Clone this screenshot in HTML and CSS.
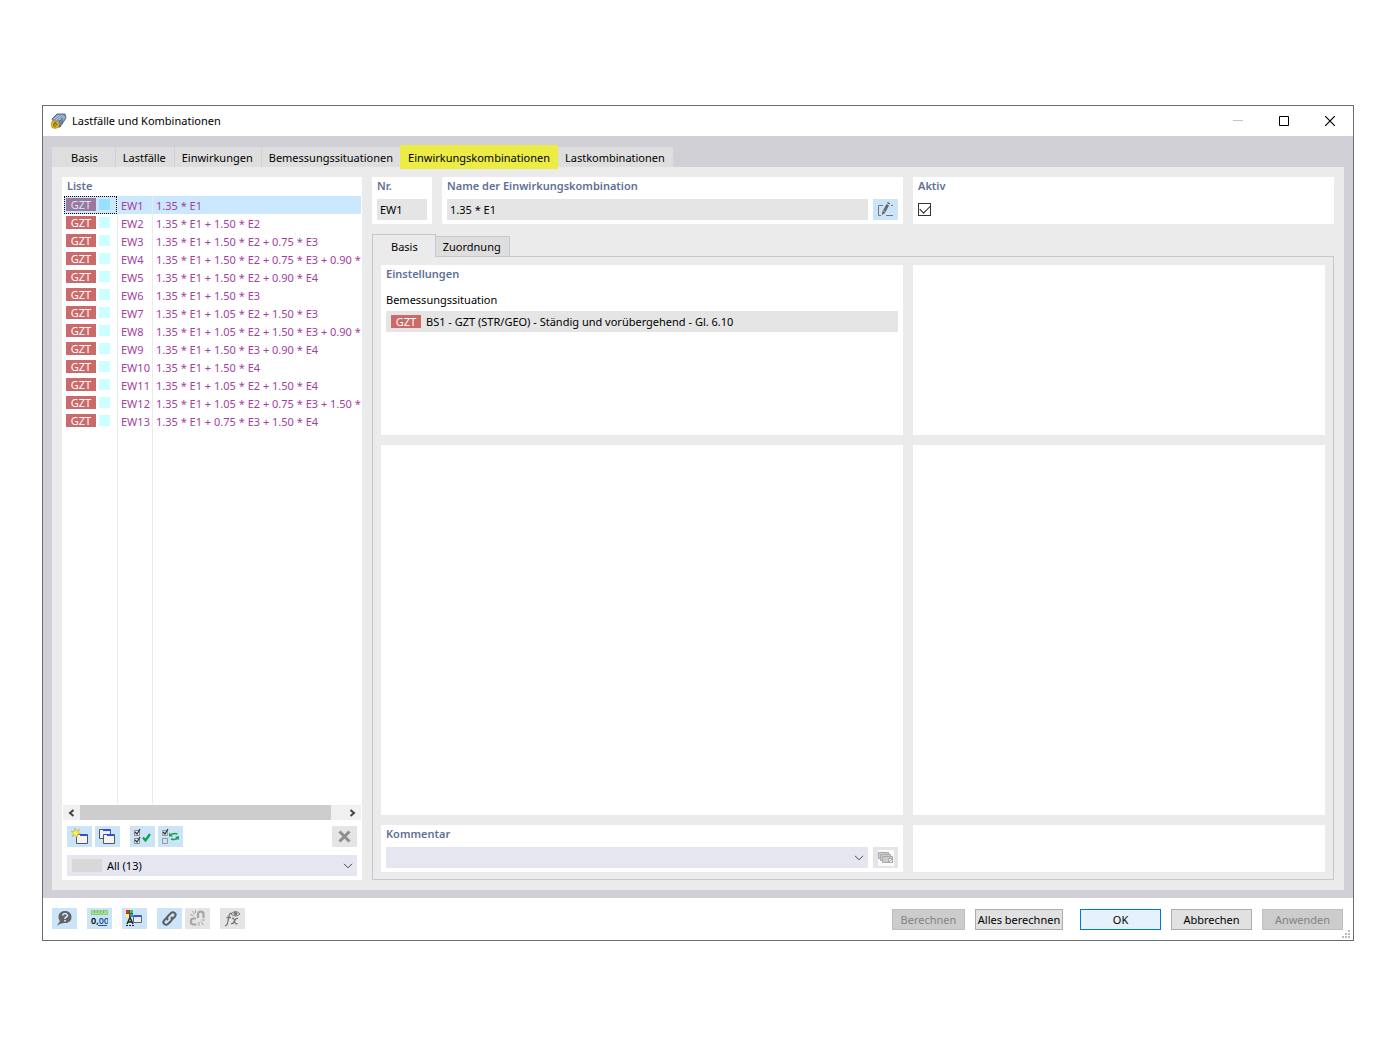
FILE: index.html
```html
<!DOCTYPE html>
<html lang="de">
<head>
  <meta charset="UTF-8">
  <title>Lastfälle und Kombinationen</title>
  <link rel="stylesheet" href="styles.css">
</head>
<body>
  <div class="dialog" role="dialog" aria-labelledby="dialog-title">
    <header class="titlebar">
      <svg class="app-icon" width="16" height="16" viewBox="0 0 16 16">
        <path d="M1 6L6 1L14 1L15 5L9 14L6 14Z" fill="#7f97bd" stroke="#5a6b88"/>
        <path d="M3 6L8 2M5 7L11 2M8 7L13 3M8 11L14 4" stroke="#b9cbe6"/>
        <path d="M9 7V14M11 5V11" stroke="#4a5b78"/>
        <circle cx="4" cy="11.500" r="4" fill="#e3b52c" stroke="#b08c1e" stroke-width=".6"/>
        <path d="M5.500 9Q2.500 9 2.700 12T5.300 12.500T3 11.200" fill="none" stroke="#7b5c10"/>
      </svg>
      <h1 id="dialog-title">Lastfälle und Kombinationen</h1>
      <div class="window-buttons">
        <button class="window-button" aria-label="Minimieren" disabled><svg width="10" height="10"><path d="M0 4.500H10" stroke="#c4c4c4"/></svg></button>
        <button class="window-button" aria-label="Maximieren"><svg width="10" height="10"><path d="M.5 .5H9.500V9.500H.5Z" fill="none" stroke="#000"/></svg></button>
        <button class="window-button" aria-label="Schließen"><svg width="10" height="10"><path d="M0 0L10 10M10 0L0 10" stroke="#000" stroke-width="1.200"/></svg></button>
      </div>
    </header>

    <div class="workspace">
      <nav class="tabs" role="tablist">
        <button class="tab tab-first" role="tab">Basis</button>
        <button class="tab" role="tab">Lastfälle</button>
        <button class="tab" role="tab">Einwirkungen</button>
        <button class="tab" role="tab">Bemessungssituationen</button>
        <button class="tab active" role="tab" aria-selected="true">Einwirkungskombinationen</button>
        <button class="tab" role="tab">Lastkombinationen</button>
      </nav>

      <main class="page">
        <section class="box list-panel">
          <h2>Liste</h2>
          <div class="list">
            <table class="combos">
              <colgroup><col class="col-type"><col class="col-nr"><col></colgroup>
              <tbody>
                <tr class="selected"><td><span class="badge">GZT</span><i class="swatch"></i></td><td>EW1</td><td>1.35 * E1</td></tr>
                <tr><td><span class="badge">GZT</span><i class="swatch"></i></td><td>EW2</td><td>1.35 * E1 + 1.50 * E2</td></tr>
                <tr><td><span class="badge">GZT</span><i class="swatch"></i></td><td>EW3</td><td>1.35 * E1 + 1.50 * E2 + 0.75 * E3</td></tr>
                <tr><td><span class="badge">GZT</span><i class="swatch"></i></td><td>EW4</td><td>1.35 * E1 + 1.50 * E2 + 0.75 * E3 + 0.90 *</td></tr>
                <tr><td><span class="badge">GZT</span><i class="swatch"></i></td><td>EW5</td><td>1.35 * E1 + 1.50 * E2 + 0.90 * E4</td></tr>
                <tr><td><span class="badge">GZT</span><i class="swatch"></i></td><td>EW6</td><td>1.35 * E1 + 1.50 * E3</td></tr>
                <tr><td><span class="badge">GZT</span><i class="swatch"></i></td><td>EW7</td><td>1.35 * E1 + 1.05 * E2 + 1.50 * E3</td></tr>
                <tr><td><span class="badge">GZT</span><i class="swatch"></i></td><td>EW8</td><td>1.35 * E1 + 1.05 * E2 + 1.50 * E3 + 0.90 *</td></tr>
                <tr><td><span class="badge">GZT</span><i class="swatch"></i></td><td>EW9</td><td>1.35 * E1 + 1.50 * E3 + 0.90 * E4</td></tr>
                <tr><td><span class="badge">GZT</span><i class="swatch"></i></td><td>EW10</td><td>1.35 * E1 + 1.50 * E4</td></tr>
                <tr><td><span class="badge">GZT</span><i class="swatch"></i></td><td>EW11</td><td>1.35 * E1 + 1.05 * E2 + 1.50 * E4</td></tr>
                <tr><td><span class="badge">GZT</span><i class="swatch"></i></td><td>EW12</td><td>1.35 * E1 + 1.05 * E2 + 0.75 * E3 + 1.50 *</td></tr>
                <tr><td><span class="badge">GZT</span><i class="swatch"></i></td><td>EW13</td><td>1.35 * E1 + 0.75 * E3 + 1.50 * E4</td></tr>
              </tbody>
            </table>
            <div class="list-rest"><span class="col-type"></span><span class="col-nr"></span></div>
          </div>
          <div class="scrollbar">
            <button class="scroll-arrow" aria-label="Nach links"><svg width="7" height="8"><path d="M5.500 1L2 4L5.500 7" fill="none" stroke="#444" stroke-width="2"/></svg></button>
            <div class="scroll-track"><div class="scroll-thumb"></div></div>
            <button class="scroll-arrow" aria-label="Nach rechts"><svg width="7" height="8"><path d="M1.500 1L5 4L1.500 7" fill="none" stroke="#444" stroke-width="2"/></svg></button>
          </div>
          <div class="list-tools">
            <button class="tool" aria-label="Neu">
              <svg width="17" height="17" viewBox="0 0 17 17">
                <path d="M5.500 6.500H16.500V15.500H5.500Z" fill="#f4f4f4" stroke="#555"/><path d="M9 6H16V8H9Z" fill="#2c4fe0"/>
                <path d="M4 0L5 3L8.500 1.500L7 4.500L9.500 6L6.500 6.500L6 9.500L4 7L1 8.500L2.500 5.500L0 3.500L3.200 3.500Z" fill="#fff34a" stroke="#a79b33" stroke-width=".5"/>
              </svg>
            </button>
            <button class="tool" aria-label="Kopieren">
              <svg width="17" height="17" viewBox="0 0 17 17">
                <path d="M.5 1.500H11.500V10.500H.5Z" fill="#e8eef4" stroke="#555"/><path d="M4 1H11V3H4Z" fill="#2c4fe0"/>
                <path d="M4.500 6.500H15.500V15.500H4.500Z" fill="#f4f4f4" stroke="#555"/><path d="M8 6H15V8H8Z" fill="#2c4fe0"/>
              </svg>
            </button>
            <button class="tool tool-group" aria-label="Alle auswählen">
              <svg width="17" height="17" viewBox="0 0 17 17" fill="none">
                <path d="M.5 2.500H5.500V7.500H.5ZM.5 10.500H5.500V15.500H.5Z" fill="#eee" stroke="#888"/>
                <path d="M1 4L3 6L6 1M1 12L3 14L6 9" stroke="#333" stroke-width="1.200"/>
                <path d="M9 9.500L11.500 12.500L16 6" stroke="#0aa14b" stroke-width="2.200"/>
              </svg>
            </button>
            <button class="tool" aria-label="Auswahl umkehren">
              <svg width="17" height="17" viewBox="0 0 17 17" fill="none">
                <path d="M.5 2.500H5.500V7.500H.5ZM.5 10.500H5.500V15.500H.5Z" stroke="#999"/>
                <path d="M1 4L3 6L6 1" stroke="#333" stroke-width="1.200"/>
                <path d="M8 7.500Q11 4.500 15.500 6M16.500 9.500Q14 12.500 9 11" stroke="#1e9e50" stroke-width="1.500"/>
                <path d="M7 4.500V8.500H11ZM17 8V12L13 9Z" fill="#1e9e50"/>
              </svg>
            </button>
            <button class="tool tool-end" aria-label="Löschen" disabled>
              <svg width="13" height="13" viewBox="0 0 13 13"><path d="M1.500 1.500L11.500 11.500M11.500 1.500L1.500 11.500" stroke="#8f8f8f" stroke-width="3"/></svg>
            </button>
          </div>
          <div class="combo filter">
            <select aria-label="Filter"><option>All (13)</option></select>
            <span class="filter-color"></span>
            <svg class="chevron" width="10" height="6"><path d="M1 .8L5 4.800L9 .8" fill="none" stroke="#444"/></svg>
          </div>
        </section>

        <div class="detail">
          <div class="head-row">
            <div class="head-left">
              <div class="box nr-box">
                <label for="nr">Nr.</label>
                <input class="field" id="nr" value="EW1" readonly>
              </div>
              <div class="box name-box">
                <label for="name">Name der Einwirkungskombination</label>
                <div class="field-row">
                  <input class="field" id="name" value="1.35 * E1" readonly>
                  <button class="tool" aria-label="Name bearbeiten">
                    <svg width="17" height="17" viewBox="0 0 17 17" fill="none">
                      <path d="M6 4.500H1.500V14.500H4M9 14.500H16M14 4.500H16" stroke="#777"/>
                      <path d="M5 14L5.500 10L8.500 11.500Z" fill="#555"/><path d="M6 9.500L9.500 3L12 4.500L8.500 11Z" fill="#666"/>
                      <path d="M10 2L10.700 1L13 2.300L12.500 3.500Z" fill="#555"/>
                    </svg>
                  </button>
                </div>
              </div>
            </div>
            <div class="box active-box">
              <label for="active">Aktiv</label>
              <input type="checkbox" id="active" checked>
            </div>
          </div>

          <nav class="subtabs" role="tablist">
            <button class="subtab active" role="tab" aria-selected="true">Basis</button>
            <button class="subtab" role="tab">Zuordnung</button>
          </nav>

          <div class="subpage">
            <section class="box settings">
              <h2>Einstellungen</h2>
              <label class="plain" for="situation">Bemessungssituation</label>
              <div class="situation">
                <span class="badge">GZT</span>
                <input id="situation" value="BS1 - GZT (STR/GEO) - Ständig und vorübergehend - Gl. 6.10" readonly>
              </div>
            </section>
            <div class="box"></div>
            <div class="box"></div>
            <div class="box"></div>
            <section class="box comment">
              <label for="comment">Kommentar</label>
              <div class="field-row">
                <div class="combo">
                  <select id="comment"><option></option></select>
                  <svg class="chevron" width="10" height="6"><path d="M1 .8L5 4.800L9 .8" fill="none" stroke="#444"/></svg>
                </div>
                <button class="tool" aria-label="Kommentare" disabled>
                  <svg width="16" height="16" viewBox="0 0 16 16">
                    <path d="M0 0H16V16H0Z" fill="#fafafa"/>
                    <g fill="#ccc" stroke="#aaa"><path d="M.5 2.500H10.500V8.500H.5Z"/><path d="M2.500 4.500H12.500V10.500H2.500Z"/><path d="M4.500 6.500H14.500V12.500H4.500Z"/></g>
                    <path d="M10.500 8.500H14.500V12.500H10.500ZM11 12L14 9" fill="#eee" stroke="#aaa"/>
                  </svg>
                </button>
              </div>
            </section>
            <div class="box"></div>
          </div>
        </div>
      </main>
    </div>

    <footer class="footer">
      <button class="tool" aria-label="Hilfe">
        <svg width="17" height="17" viewBox="0 0 17 17">
          <path d="M9 1C13 1 15.500 3.500 15.500 7S13 13 9.500 13C7 13 6 13 1 15.500L4 11C3 10 2.500 8.500 2.500 7C2.500 3.500 5 1 9 1Z" fill="#606468"/>
          <path d="M6.500 5.500Q7 3.500 9 3.500T11.500 5.500Q11.500 6.500 10 7.200T9 9" fill="none" stroke="#dceaf6" stroke-width="1.600"/><path d="M8.200 10H9.900V11.600H8.200Z" fill="#dceaf6"/>
        </svg>
      </button>
      <button class="tool gap" aria-label="Einheiten und Dezimalstellen">
        <svg width="17" height="17" viewBox="0 0 17 17">
          <path d="M.5 .5H16.500V4.500H.5Z" fill="#a4e093" stroke="#8ccc7e"/><path d="M3.500 1V3M6.500 1V3M9.500 1V3M12.500 1V3" stroke="#6fb562"/>
          <text class="units" x="0" y="14">0,<tspan fill="#26559a">00</tspan></text><path d="M7 15.500H16" stroke="#26559a"/>
        </svg>
      </button>
      <button class="tool gap" aria-label="Anzeige">
        <svg width="17" height="17" viewBox="0 0 17 17">
          <path d="M0 0H7V7H0Z" fill="#555"/><path d="M0 0H3V3H0Z" fill="#f22"/><path d="M4 0H7V3H4Z" fill="#3c3"/><path d="M0 4H3V7H0Z" fill="#ff2"/><path d="M4 4H7V7H4Z" fill="#38f"/>
          <path d="M1 14L4 7.500L7 14M2.500 12H6" fill="none" stroke="#222" stroke-width="1.400"/><path d="M0 15.500H8" stroke="#222" stroke-dasharray="2 1"/>
          <path d="M7.500 5.500H15.500V12.500H7.500Z" fill="#e9edf2" stroke="#666"/><path d="M8 5H15V7H8Z" fill="#3858c8"/>
        </svg>
      </button>
      <button class="tool gap" aria-label="Verknüpfen">
        <svg width="17" height="17" viewBox="0 0 17 17" fill="none" stroke="#5a5d61" stroke-width="2">
          <path d="M7 10C5.500 8.500 6 7 7 6L10 3C12.500 1 16 4 14 6.500L11.500 9"/><path d="M10 7C11.500 8.500 11 10 10 11L7 14C4.500 16 1 13 3 10.500L5.500 8"/>
        </svg>
      </button>
      <button class="tool" aria-label="Verknüpfung lösen" disabled>
        <svg width="17" height="17" viewBox="0 0 17 17" fill="none" stroke="#a5a5a5">
          <path d="M9 8V4C9 .8 14.500 .8 14.500 4V8M7 8.500H4.500C1 8.500 1 14.500 4.500 14.500H7.500" stroke-width="2.200"/>
          <path d="M3.500 1L5.500 4M1 4.500L4.500 5.500M6.500 0V3M10 12V16M12 11.500L14.500 15M12.500 10H16"/>
        </svg>
      </button>
      <button class="tool gap" aria-label="Formel" disabled>
        <svg width="17" height="17" viewBox="0 0 17 17" fill="none" stroke="#777">
          <path d="M1 15.500Q3 16.500 4 11L5 6Q5.500 2.500 8 3.500M2.500 7.500H7" stroke-width="1.300"/>
          <path d="M8 8.500Q10 7.500 10.500 11T13.500 13.500M14 8.500Q11.500 8 10.500 11T7 13.500" stroke-width="1.300"/>
          <path d="M7 4Q11.500 -1 16 4Q11.500 8 7 4Z"/><circle cx="11.500" cy="3.500" r="1.500" fill="#777"/>
        </svg>
      </button>
      <div class="actions">
        <button class="action" disabled>Berechnen</button>
        <button class="action calc-all">Alles berechnen</button>
        <button class="action wide ok">OK</button>
        <button class="action wide">Abbrechen</button>
        <button class="action wide" disabled>Anwenden</button>
      </div>
      <svg class="grip" width="8" height="8" fill="#bbb"><path d="M6 0H8V2H6ZM3 3H5V5H3ZM6 3H8V5H6ZM0 6H2V8H0ZM3 6H5V8H3ZM6 6H8V8H6Z"/></svg>
    </footer>
  </div>
</body>
</html>
```
FILE: styles.css
```css
* {
    box-sizing: border-box;
}
body {
    margin: 0;
    min-height: 100vh;
    padding: 105px 46px 109px 42px;
    display: flex;
    background: #fff;
    color: #000;
    font: 11px/16px "Noto Sans", "Open Sans", sans-serif;
}
button, input, select {
    font: inherit;
    color: inherit;
    border: 0;
    border-radius: 0;
    margin: 0;
    padding: 0;
}
svg {
    display: block;
    flex: none;
}
h1, h2 {
    margin: 0;
    font-size: inherit;
}
.dialog {
    flex: 1;
    min-width: 0;
    display: flex;
    flex-direction: column;
    border: 1px solid #6d6d71;
}

/* title bar */
.titlebar {
    height: 30px;
    padding-left: 8px;
    display: flex;
    align-items: center;
    gap: 5px;
}
.titlebar h1 {
    font-weight: 400;
}
.window-buttons {
    margin-left: auto;
    display: flex;
}
.window-button {
    width: 46px;
    height: 28px;
    display: flex;
    align-items: center;
    justify-content: center;
    background: none;
}

/* main tabs */
.workspace {
    flex: 1;
    display: flex;
    flex-direction: column;
    padding: 9px 9px 8px;
    background: #d1d0d6;
}
.tabs {
    display: flex;
    align-items: flex-end;
}
.tab {
    height: 20px;
    padding: 2px 8px 0 7px;
    background: #dedede;
    border-right: 1px solid #d1d0d6;
    white-space: nowrap;
}
.tab-first {
    padding-left: 19px;
    padding-right: 17px;
}
.tab.active {
    height: 24px;
    margin: 0 0 -2px -2px;
    padding: 1px 8px 0;
    background: #ecec45;
    border: 0;
    z-index: 1;
}
.page {
    flex: 1;
    display: flex;
    gap: 10px;
    padding: 10px;
    background: #ebebeb;
}
.box {
    padding: 1px 5px 4px;
    background: #fff;
}
h2, label {
    display: block;
    font-weight: 600;
    color: #5f6f96;
}
label.plain {
    font-weight: 400;
    color: #000;
}

/* list */
.list-panel {
    width: 300px;
    padding: 1px 1px 4px;
    display: flex;
    flex-direction: column;
}
.list-panel h2 {
    padding-left: 4px;
    height: 18px;
}
.list {
    flex: 1;
    display: flex;
    flex-direction: column;
    overflow: hidden;
    padding-left: 1px;
}
.combos {
    width: 100%;
    table-layout: fixed;
    border-collapse: separate;
    border-spacing: 0;
    color: #a23ea2;
}
.combos td {
    height: 18px;
    padding: 1px 0 0 3px;
    line-height: 17px;
    white-space: nowrap;
    overflow: hidden;
}
.combos td:first-child {
    padding: 2px 0 0 2px;
    line-height: 0;
    vertical-align: top;
}
.combos td + td {
    border-left: 1px solid #ebebeb;
}
.col-type {
    width: 53px;
}
.col-nr {
    width: 35px;
}
.badge {
    display: inline-block;
    width: 30px;
    height: 13px;
    background: #cb6a6a;
    color: #fff;
    line-height: 13px;
    text-align: center;
    vertical-align: top;
}
.swatch {
    display: inline-block;
    width: 11px;
    height: 11px;
    margin: 1px 0 0 3px;
    background: #ccffff;
    vertical-align: top;
}
.selected {
    background: #cce8ff;
}
.selected td:first-child {
    outline: 1px dotted #000;
    outline-offset: -1px;
}
.selected .badge {
    background: #9c789c;
    color: #cce8ff;
}
.selected .swatch {
    background: #99dfff;
}
.list-rest {
    flex: 1;
    display: flex;
}
.list-rest span {
    border-right: 1px solid #ebebeb;
}
.list-rest .col-type {
    width: 54px;
}
.scrollbar {
    height: 17px;
    display: flex;
    background: #f0f0f0;
    border: solid #fff;
    border-width: 1px 0;
}
.scroll-arrow {
    width: 17px;
    display: flex;
    align-items: center;
    justify-content: center;
    background: none;
}
.scroll-track {
    flex: 1;
}
.scroll-thumb {
    width: 95%;
    height: 100%;
    background: #cdcdcd;
}
.list-tools {
    display: flex;
    gap: 3px;
    padding: 5px 4px 8px;
}
.tool {
    width: 25px;
    height: 21px;
    flex: none;
    display: flex;
    align-items: center;
    justify-content: center;
    background: #cce4f7;
}
.tool:disabled {
    background: #e5e5e5;
}
.tool-group {
    margin-left: 7px;
}
.tool-end {
    margin-left: auto;
}
.combo {
    flex: 1;
    display: grid;
    align-items: center;
    background: #e6e6f1;
}
.combo > * {
    grid-area: 1 / 1;
}
.combo select {
    width: 100%;
    height: 21px;
    padding: 0 20px 0 5px;
    appearance: none;
    background: none;
}
.chevron {
    justify-self: end;
    margin-right: 4px;
    pointer-events: none;
}
.filter {
    flex: none;
    margin: 0 4px;
}
.filter select {
    padding-left: 40px;
}
.filter-color {
    width: 30px;
    height: 13px;
    margin-left: 5px;
    background: #d8d8d8;
    pointer-events: none;
}

/* details */
.detail {
    flex: 1;
    min-width: 0;
    display: flex;
    flex-direction: column;
}
.head-row {
    display: grid;
    grid-template-columns: 531fr 421fr;
    gap: 10px;
    margin-bottom: 10px;
}
.head-left {
    display: flex;
    gap: 10px;
}
.head-row label {
    margin-bottom: 5px;
}
.nr-box {
    width: 60px;
}
.name-box {
    flex: 1;
}
.field {
    width: 100%;
    height: 21px;
    padding: 0 3px;
    background: #e5e5e5;
}
.field-row {
    display: flex;
    gap: 5px;
}
.active-box input {
    display: grid;
    place-content: center;
    width: 13px;
    height: 13px;
    margin-top: 9px;
    appearance: none;
    border: 1px solid #333;
}
.active-box input:checked::before {
    content: "";
    width: 9px;
    height: 5px;
    margin-bottom: 3px;
    border: solid #222;
    border-width: 0 0 1px 1px;
    transform: rotate(-45deg);
}
.subtabs {
    display: flex;
    align-items: flex-end;
}
.subtab {
    height: 20px;
    padding: 1px 8px 0 7px;
    background: #dedede;
    border: 1px solid #c6c6d2;
    border-width: 1px 1px 0 0;
}
.subtab.active {
    height: 23px;
    padding: 1px 17px 0 18px;
    margin-bottom: -1px;
    background: #ebebeb;
    border-left-width: 1px;
    z-index: 1;
}
.subpage {
    flex: 1;
    display: grid;
    grid-template-columns: 522fr 412fr;
    grid-template-rows: 170fr 370fr 47px;
    gap: 10px;
    padding: 8px 8px 7px;
    border: 1px solid #c6c6d2;
}
.settings .plain {
    margin: 10px 0 3px;
}
.situation {
    display: flex;
    align-items: center;
    gap: 5px;
    height: 21px;
    padding-left: 5px;
    background: #e5e5e5;
}
.situation input {
    flex: 1;
    background: none;
}
.comment label {
    margin-bottom: 5px;
}

/* footer */
.footer {
    height: 42px;
    padding: 10px;
    padding-left: 9px;
    display: flex;
    gap: 3px;
    position: relative;
}
.footer .gap {
    margin-left: 7px;
}
.units {
    font: 600 9px "Noto Sans", sans-serif;
}
.actions {
    display: flex;
    gap: 10px;
    margin: 1px 0 0 auto;
}
.action {
    width: 73px;
    height: 21px;
    background: #e1e1e1;
    border: 1px solid #adadad;
    white-space: nowrap;
}
.action:disabled {
    background: #cccccc;
    border-color: #bfbfbf;
    color: #838383;
}
.calc-all {
    width: 88px;
}
.wide {
    width: 81px;
}
.ok {
    margin-left: 7px;
    background: #e5f1fb;
    border-color: #0078d7;
}
.grip {
    position: absolute;
    right: 3px;
    bottom: 2px;
}
```
